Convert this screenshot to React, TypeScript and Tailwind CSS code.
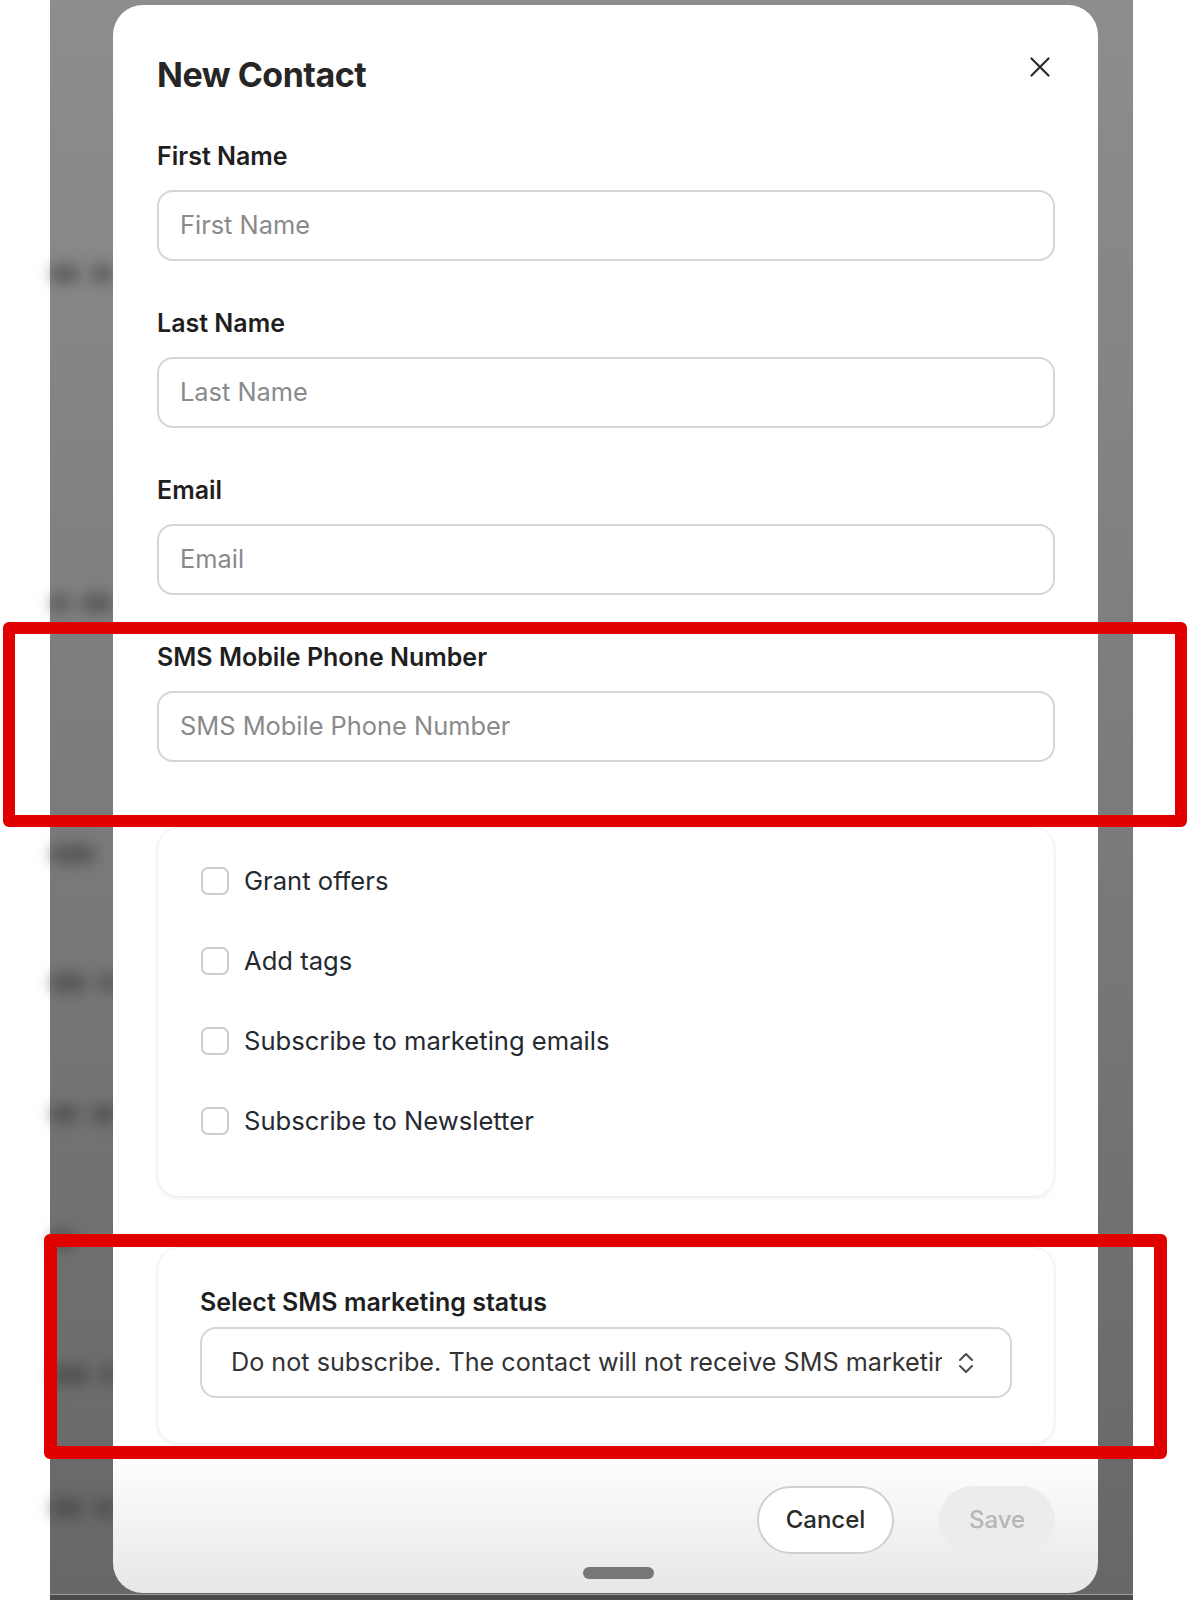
import React from "react";

const fields = ["First Name", "Last Name", "Email", "SMS Mobile Phone Number"];
const options = ["Grant offers", "Add tags", "Subscribe to marketing emails", "Subscribe to Newsletter"];

// blurred rows of the page behind the sheet (top offset, blob widths)
const smudges: [number, number, number][] = [
  [274, 30, 24],
  [603, 20, 34],
  [854, 46, 0],
  [983, 38, 20],
  [1114, 30, 28],
  [1240, 26, 0],
  [1375, 40, 18],
  [1508, 34, 22],
];

const CloseIcon = () => (
  <svg width="20" height="20" viewBox="0 0 20 20" fill="none" stroke="#2b2b2b" strokeWidth="2.2" strokeLinecap="round">
    <path d="M1.5 1.5 L18.5 18.5 M18.5 1.5 L1.5 18.5" />
  </svg>
);

const Chevrons = () => (
  <svg width="16" height="24" viewBox="0 0 16 24" fill="none" stroke="#4a4a4a" strokeWidth="2" strokeLinecap="round" strokeLinejoin="round">
    <path d="M2 9 L8 3 L14 9" />
    <path d="M2 15 L8 21 L14 15" />
  </svg>
);

const App: React.FC = () => {
  return (
    <div className="relative w-[1191px] h-[1600px] bg-white pl-[50px] font-['Inter',sans-serif] overflow-hidden">
      <div className="relative w-[1083px] h-[1600px] bg-[linear-gradient(to_bottom,#8d8d8d,#7b7b7b_50%,#676767)] pl-[63px] pt-[5px]">
        {/* page underneath, blurred */}
        <div className="absolute inset-0">
          {smudges.map(([top, a, b]) => (
            <div key={top} className="absolute left-0 flex gap-[10px]" style={{ top: top - 10 }}>
              <div className="h-[20px] rounded-full bg-[#3a3a3a]/50 blur-[7px]" style={{ width: a }} />
              {b > 0 && <div className="h-[20px] rounded-full bg-[#3a3a3a]/50 blur-[7px]" style={{ width: b }} />}
            </div>
          ))}
          <div className="absolute left-0 right-0 bottom-0 h-[6px] bg-[#4a4a4a] border-t border-[#9a9a9a]" />
        </div>

        {/* sheet */}
        <div className="relative w-[985px] rounded-[30px] bg-[linear-gradient(to_bottom,#ffffff_0%,#ffffff_91%,#e7e7e7_100%)] pl-[44px] pr-[43px] pt-[50px] pb-[14px]">
          <div className="flex items-start justify-between">
            <h1 className="text-[34px] leading-[40px] font-bold tracking-[-0.5px] text-[#262626]">New Contact</h1>
            <button className="-mt-[3px] flex h-[30px] w-[30px] items-center justify-center">
              <CloseIcon />
            </button>
          </div>

          <div className="mt-[46px] flex flex-col gap-[47px]">
            {fields.map((f) => (
              <div key={f}>
                <label className="block text-[25px] leading-[30px] font-semibold text-[#1f1f1f]">{f}</label>
                <div className="mt-[19px] flex h-[71px] items-center rounded-[16px] border-2 border-[#d5d5d5] px-[21px] text-[25.4px] text-[#8a8a8a]">
                  {f}
                </div>
              </div>
            ))}
          </div>

          <div className="mt-[65px] rounded-[22px] border border-[#efefef] bg-white px-[43px] pt-[39px] pb-[61px] shadow-[0_2px_4px_rgba(0,0,0,0.06)]">
            <div className="flex flex-col gap-[52px]">
              {options.map((o) => (
                <label key={o} className="flex h-[28px] items-center gap-[15px]">
                  <span className="h-[28px] w-[28px] rounded-[7px] border-2 border-[#cdcdcd] bg-white" />
                  <span className="text-[25.6px] text-[#252a31]">{o}</span>
                </label>
              ))}
            </div>
          </div>

          <div className="mt-[50px] rounded-[22px] border border-[#efefef] bg-white px-[42px] pt-[39px] pb-[45px] shadow-[0_2px_4px_rgba(0,0,0,0.06)]">
            <label className="block text-[25px] leading-[30px] font-semibold text-[#1f1f1f]">
              Select SMS marketing status
            </label>
            <div className="mt-[10px] flex h-[71px] items-center gap-[16px] rounded-[16px] border-2 border-[#d5d5d5] pl-[29px] pr-[36px]">
              <div className="flex-1 overflow-hidden whitespace-nowrap text-[25.2px] text-[#333333]">
                Do not subscribe. The contact will not receive SMS marketing
              </div>
              <Chevrons />
            </div>
          </div>

          <div className="mt-[42px] flex justify-end gap-[45px]">
            <button className="h-[68px] w-[137px] rounded-full border-2 border-[#d0d0d0] bg-white text-[24px] font-medium text-[#2b2b2b]">
              Cancel
            </button>
            <button className="h-[68px] w-[116px] rounded-full bg-[#ececec] text-[24px] font-medium text-[#b6b6b6]">
              Save
            </button>
          </div>

          <div className="mt-[13px] ml-[426px] h-[12px] w-[71px] rounded-full bg-[#777777]" />
        </div>
      </div>

      {/* annotation boxes */}
      <div className="absolute left-[3px] top-[622px] h-[205px] w-[1184px] rounded-[6px] border-[12px] border-[#e10000]" />
      <div className="absolute left-[44px] top-[1234px] h-[225px] w-[1123px] rounded-[6px] border-[13px] border-[#e10000]" />
    </div>
  );
};

export default App;
